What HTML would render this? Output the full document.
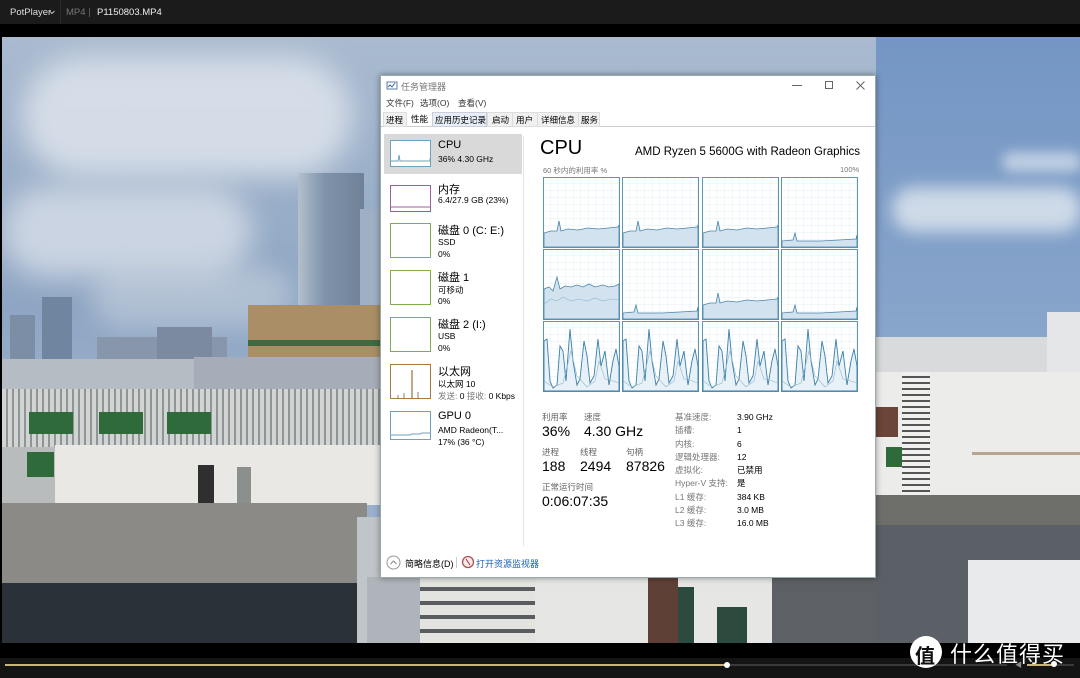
<!DOCTYPE html>
<html><head><meta charset="utf-8">
<style>
*{margin:0;padding:0;box-sizing:border-box}
body{width:1080px;height:678px;overflow:hidden;background:#000;position:relative;font-family:"Liberation Sans","Noto Sans CJK SC",sans-serif}
.a{position:absolute}
.t{position:absolute;white-space:nowrap;color:#000}
</style></head><body>
<!-- top bar -->
<div class="a" style="left:0;top:0;width:1080px;height:24px;background:#1b1b1b"></div>
<div class="a" style="left:60px;top:0;width:1px;height:24px;background:#2c2c2c"></div>
<div class="t" style="left:10px;top:7px;font-size:9.5px;color:#ddd">PotPlayer</div>
<svg class="a" style="left:49px;top:10px" width="6" height="5"><polyline points="0.5,1 3,3.5 5.5,1" fill="none" stroke="#bbb"/></svg>
<div class="t" style="left:66px;top:7px;font-size:9.5px;color:#777">MP4</div>
<div class="a" style="left:89px;top:8px;width:1px;height:9px;background:#555"></div>
<div class="t" style="left:97px;top:7px;font-size:9.5px;color:#eee">P1150803.MP4</div>

<!-- video scene -->
<div class="a" style="left:2px;top:37px;width:1078px;height:606px;background:linear-gradient(#aabbd0,#8ea6c3 45%,#9ab0cc 60%);overflow:hidden">
 <div class="a" style="left:20px;top:20px;width:330px;height:120px;border-radius:60px;background:rgba(230,234,240,.75);filter:blur(14px)"></div>
 <div class="a" style="left:0;top:150px;width:250px;height:90px;border-radius:45px;background:rgba(225,230,238,.7);filter:blur(14px)"></div>
 <div class="a" style="left:90px;top:230px;width:200px;height:60px;border-radius:30px;background:rgba(210,218,228,.5);filter:blur(12px)"></div>
 <div class="a" style="left:874px;top:0;width:204px;height:300px;background:linear-gradient(#7496c4,#88a5cb)"></div>
 <div class="a" style="left:890px;top:150px;width:190px;height:45px;border-radius:22px;background:rgba(225,232,240,.8);filter:blur(8px)"></div>
 <div class="a" style="left:1000px;top:115px;width:80px;height:20px;border-radius:10px;background:rgba(220,228,238,.7);filter:blur(6px)"></div>
 <div class="a" style="left:8px;top:278px;width:25px;height:60px;background:#7c8ea6"></div>
 <div class="a" style="left:40px;top:260px;width:30px;height:80px;background:#7085a0"></div>
 <div class="a" style="left:95px;top:300px;width:130px;height:40px;background:#8796aa"></div>
 <div class="a" style="left:155px;top:290px;width:55px;height:50px;background:#7b8aa0"></div>
 <div class="a" style="left:296px;top:136px;width:66px;height:162px;background:linear-gradient(90deg,#b4c0cc,#7f93aa 40%,#6f8196)"></div>
 <div class="a" style="left:358px;top:172px;width:22px;height:126px;background:#9fb0c4"></div>
 <div class="a" style="left:246px;top:268px;width:134px;height:52px;background:#a98e66"></div>
 <div class="a" style="left:246px;top:303px;width:134px;height:6px;background:#3f6a40"></div>
 <div class="a" style="left:192px;top:320px;width:188px;height:32px;background:#a7adb8"></div>
 <div class="a" style="left:0;top:322px;width:192px;height:30px;background:#b5bcc4"></div>
 <div class="a" style="left:0;top:352px;width:380px;height:58px;background:repeating-linear-gradient(90deg,#d2d4d4 0 4px,#8f9494 4px 6px)"></div>
 <div class="a" style="left:27px;top:375px;width:44px;height:22px;background:#2f6b3a"></div>
 <div class="a" style="left:97px;top:375px;width:44px;height:22px;background:#2f6b3a"></div>
 <div class="a" style="left:165px;top:375px;width:44px;height:22px;background:#2f6b3a"></div>
 <div class="a" style="left:0;top:410px;width:55px;height:60px;background:#b9bcbc"></div>
 <div class="a" style="left:25px;top:415px;width:27px;height:25px;background:#2f6b3a"></div>
 <div class="a" style="left:53px;top:408px;width:327px;height:60px;background:#e9e8e4"></div>
 <div class="a" style="left:196px;top:428px;width:16px;height:38px;background:#2f2f2f"></div>
 <div class="a" style="left:235px;top:430px;width:14px;height:36px;background:#8b8f8d"></div>
 <div class="a" style="left:0;top:466px;width:365px;height:80px;background:#8c8a86"></div>
 <div class="a" style="left:0;top:546px;width:365px;height:60px;background:#2b3138"></div>
 <div class="a" style="left:355px;top:480px;width:25px;height:126px;background:#bfc5c9"></div>
 <div class="a" style="left:365px;top:540px;width:65px;height:66px;background:#aeb4ba"></div>
 <div class="a" style="left:418px;top:540px;width:115px;height:66px;background:repeating-linear-gradient(#e3e3e0 0 10px,#5a5d5f 10px 14px)"></div>
 <div class="a" style="left:533px;top:540px;width:240px;height:66px;background:#e6e6e4"></div>
 <div class="a" style="left:646px;top:540px;width:30px;height:66px;background:#5e4036"></div>
 <div class="a" style="left:676px;top:550px;width:16px;height:56px;background:#2d4a3e"></div>
 <div class="a" style="left:715px;top:570px;width:30px;height:36px;background:#2d4a3e"></div>
 <div class="a" style="left:770px;top:540px;width:110px;height:66px;background:#5d6064"></div>
 <div class="a" style="left:874px;top:300px;width:204px;height:40px;background:#d8dadc"></div>
 <div class="a" style="left:1045px;top:275px;width:35px;height:60px;background:#e4e6e8"></div>
 <div class="a" style="left:874px;top:335px;width:204px;height:140px;background:#ececea"></div>
 <div class="a" style="left:900px;top:335px;width:28px;height:125px;background:repeating-linear-gradient(#f0f0ee 0 4px,#555 4px 6px)"></div>
 <div class="a" style="left:874px;top:370px;width:22px;height:30px;background:#6a4538"></div>
 <div class="a" style="left:884px;top:410px;width:16px;height:20px;background:#2f6b3a"></div>
 <div class="a" style="left:970px;top:415px;width:110px;height:3px;background:#b8a590"></div>
 <div class="a" style="left:874px;top:458px;width:204px;height:30px;background:#6e6e6a"></div>
 <div class="a" style="left:874px;top:488px;width:204px;height:118px;background:#5b6066"></div>
 <div class="a" style="left:966px;top:523px;width:112px;height:83px;background:#e8eaec"></div>
</div>

<!-- task manager -->
<div class="a" style="left:380px;top:75px;width:496px;height:503px;background:#fff;border:1px solid #9aa;box-shadow:0 0 6px rgba(0,0,0,.4)">
 <svg class="a" style="left:5px;top:4px" width="12" height="12"><rect x="1" y="2" width="10" height="7" fill="none" stroke="#5a7da8"/><polyline points="2,7 4,5 6,7 9,3" fill="none" stroke="#3a6aa0"/></svg>
 <div class="t" style="left:20px;top:4px;font-size:9px;color:#777">任务管理器</div>
 <div class="a" style="left:411px;top:9px;width:10px;height:1px;background:#666"></div>
 <div class="a" style="left:444px;top:5px;width:8px;height:8px;border:1px solid #666"></div>
 <svg class="a" style="left:475px;top:5px" width="9" height="9"><path d="M0.5 0.5L8.5 8.5M8.5 0.5L0.5 8.5" stroke="#666"/></svg>
 <div class="t" style="left:5px;top:21px;font-size:8.5px;color:#333">文件(F)</div>
 <div class="t" style="left:39px;top:21px;font-size:8.5px;color:#333">选项(O)</div>
 <div class="t" style="left:77px;top:21px;font-size:8.5px;color:#333">查看(V)</div>
 <div class="a" style="left:0;top:35px;width:494px;height:16px;border-bottom:1px solid #ccc;background:#fff"></div>
 <div class="a" style="left:2px;top:36px;width:24px;height:15px;background:#f0f0f0;border:1px solid #ddd"></div>
 <div class="t" style="left:5px;top:38px;font-size:8.5px">进程</div>
 <div class="t" style="left:30px;top:37px;font-size:8.5px">性能</div>
 <div class="a" style="left:51px;top:36px;width:55px;height:15px;background:#e6eff8;border:1px solid #ccd"></div>
 <div class="t" style="left:54px;top:38px;font-size:8.5px">应用历史记录</div>
 <div class="a" style="left:106px;top:36px;width:113px;height:15px;background:#f0f0f0;border:1px solid #ddd"></div>
 <div class="t" style="left:111px;top:38px;font-size:8.5px">启动</div>
 <div class="t" style="left:135px;top:38px;font-size:8.5px">用户</div>
 <div class="t" style="left:160px;top:38px;font-size:8.5px">详细信息</div>
 <div class="t" style="left:200px;top:38px;font-size:8.5px">服务</div>
 <div class="a" style="left:197px;top:36px;width:1px;height:15px;background:#ddd"></div>
 <div class="a" style="left:156px;top:36px;width:1px;height:15px;background:#ddd"></div>
 <div class="a" style="left:131px;top:36px;width:1px;height:15px;background:#ddd"></div>

 <div class="a" style="left:3px;top:58px;width:138px;height:40px;background:#d9d9d9"></div>
 <div class="a" style="left:142px;top:60px;width:1px;height:410px;background:#e5e5e5"></div>
 <svg class="a" style="left:9px;top:64px" width="41" height="300">
  <rect x=".5" y=".5" width="40" height="26" fill="#fff" stroke="#6ea2c0"/><polyline points="1,21 8,21 9,15 10,21 40,21 40,18" fill="none" stroke="#6ea2c0"/>
  <rect x=".5" y="45.5" width="40" height="26" fill="#fff" stroke="#9c5f9c"/><line x1="1" y1="67" x2="40" y2="67" stroke="#9c5f9c"/>
  <rect x=".5" y="83.5" width="40" height="34" fill="#fff" stroke="#7fae52"/>
  <rect x=".5" y="130.5" width="40" height="34" fill="#fff" stroke="#7fae52"/>
  <rect x=".5" y="177.5" width="40" height="34" fill="#fff" stroke="#7fae52"/>
  <rect x=".5" y="224.5" width="40" height="34" fill="#fff" stroke="#a77b40"/>
  <line x1="22" y1="258" x2="22" y2="230" stroke="#a77b40" stroke-width="1.3"/><line x1="14" y1="258" x2="14" y2="253" stroke="#a77b40"/><line x1="28" y1="258" x2="28" y2="252" stroke="#a77b40"/><line x1="8" y1="258" x2="8" y2="255" stroke="#a77b40"/>
  <rect x=".5" y="271.5" width="40" height="28" fill="#fff" stroke="#6ea2c0"/><polyline points="1,295 20,295 22,294 30,294 32,293 40,293" fill="none" stroke="#6ea2c0"/>
 </svg>
 <div class="t" style="left:57px;top:63px;font-size:11px">CPU</div>
 <div class="t" style="left:57px;top:78px;font-size:8.5px">36% 4.30 GHz</div>
 <div class="t" style="left:57px;top:105px;font-size:11px">内存</div>
 <div class="t" style="left:57px;top:119px;font-size:8.5px">6.4/27.9 GB (23%)</div>
 <div class="t" style="left:57px;top:146px;font-size:11px">磁盘 0 (C: E:)</div>
 <div class="t" style="left:57px;top:161px;font-size:8.5px">SSD</div>
 <div class="t" style="left:57px;top:173px;font-size:8.5px">0%</div>
 <div class="t" style="left:57px;top:193px;font-size:11px">磁盘 1</div>
 <div class="t" style="left:57px;top:208px;font-size:8.5px">可移动</div>
 <div class="t" style="left:57px;top:220px;font-size:8.5px">0%</div>
 <div class="t" style="left:57px;top:240px;font-size:11px">磁盘 2 (I:)</div>
 <div class="t" style="left:57px;top:255px;font-size:8.5px">USB</div>
 <div class="t" style="left:57px;top:267px;font-size:8.5px">0%</div>
 <div class="t" style="left:57px;top:287px;font-size:11px">以太网</div>
 <div class="t" style="left:57px;top:302px;font-size:8.5px">以太网 10</div>
 <div class="t" style="left:57px;top:314px;font-size:8.5px"><span style="color:#777">发送:</span> 0 <span style="color:#777">接收:</span> 0 Kbps</div>
 <div class="t" style="left:57px;top:334px;font-size:11px">GPU 0</div>
 <div class="t" style="left:57px;top:349px;font-size:8.5px">AMD Radeon(T...</div>
 <div class="t" style="left:57px;top:361px;font-size:8.5px">17% (36 °C)</div>

 <div class="t" style="left:159px;top:61px;font-size:20px">CPU</div>
 <div class="t" style="left:254px;top:70px;font-size:11.5px">AMD Ryzen 5 5600G with Radeon Graphics</div>
 <div class="t" style="left:162px;top:89px;font-size:7.5px;color:#777">60 秒内的利用率 %</div>
 <div class="t" style="left:459px;top:89px;font-size:7.5px;color:#777">100%</div>

 <div class="t" style="left:161px;top:335px;font-size:8.5px;color:#666">利用率</div>
 <div class="t" style="left:203px;top:335px;font-size:8.5px;color:#666">速度</div>
 <div class="t" style="left:161px;top:347px;font-size:14px">36%</div>
 <div class="t" style="left:203px;top:347px;font-size:14px">4.30 GHz</div>
 <div class="t" style="left:161px;top:370px;font-size:8.5px;color:#666">进程</div>
 <div class="t" style="left:199px;top:370px;font-size:8.5px;color:#666">线程</div>
 <div class="t" style="left:245px;top:370px;font-size:8.5px;color:#666">句柄</div>
 <div class="t" style="left:161px;top:382px;font-size:14px">188</div>
 <div class="t" style="left:199px;top:382px;font-size:14px">2494</div>
 <div class="t" style="left:245px;top:382px;font-size:14px">87826</div>
 <div class="t" style="left:161px;top:405px;font-size:8.5px;color:#666">正常运行时间</div>
 <div class="t" style="left:161px;top:417px;font-size:14px">0:06:07:35</div>

 <div class="t" style="left:294px;top:335px;font-size:8.5px;color:#777;line-height:13.3px">基准速度:<br>插槽:<br>内核:<br>逻辑处理器:<br>虚拟化:<br>Hyper-V 支持:<br>L1 缓存:<br>L2 缓存:<br>L3 缓存:</div>
 <div class="t" style="left:356px;top:335px;font-size:8.5px;line-height:13.3px">3.90 GHz<br>1<br>6<br>12<br>已禁用<br>是<br>384 KB<br>3.0 MB<br>16.0 MB</div>

 <svg class="a" style="left:5px;top:479px" width="15" height="15"><circle cx="7.5" cy="7.5" r="6.5" fill="none" stroke="#999"/><polyline points="4.5,9 7.5,6 10.5,9" fill="none" stroke="#888"/></svg>
 <div class="t" style="left:24px;top:481px;font-size:9px">简略信息(D)</div>
 <div class="a" style="left:75px;top:481px;width:1px;height:11px;background:#ccc"></div>
 <svg class="a" style="left:80px;top:479px" width="14" height="14"><circle cx="7" cy="7" r="5.5" fill="#f4eaea" stroke="#a55" stroke-width="1.3"/><line x1="5" y1="4" x2="9" y2="10" stroke="#a33"/></svg>
 <div class="t" style="left:95px;top:481px;font-size:9px;color:#1a5fb4">打开资源监视器</div>
</div>

<svg class="a" style="left:540px;top:174px" width="322" height="222">
 <defs>
  <pattern id="g" width="7.6" height="7" patternUnits="userSpaceOnUse"><path d="M7.6 0V7M0 7H7.6" fill="none" stroke="#dceaf4" stroke-width=".7"/></pattern>
  <g id="c"><rect x=".5" y=".5" width="76" height="70" fill="url(#g)" stroke="#5d95b3"/></g>
  <g id="f1"><path d="M1 56 L8 54 L14 54 L16 44 L18 54 L25 52 L35 53 L45 51 L55 52 L65 51 L75 50 L76 48 L76 70 L1 70Z" fill="#d2e3ef" stroke="#4a86aa" stroke-width=".8"/></g>
  <g id="f2"><path d="M1 64 L12 63 L14 56 L16 64 L40 64 L75 62 L76 58 L76 70 L1 70Z" fill="#d2e3ef" stroke="#4a86aa" stroke-width=".8"/></g>
  <g id="f3"><path d="M1 40 L6 38 L10 42 L14 28 L17 40 L22 37 L28 38 L34 36 L40 38 L46 35 L52 38 L60 36 L66 38 L72 37 L76 35 L76 70 L1 70Z" fill="#d2e3ef" stroke="#4a86aa" stroke-width=".8"/><path d="M1 55 L8 50 L14 52 L20 48 L28 52 L36 50 L44 52 L52 49 L60 52 L68 50 L76 51" fill="none" stroke="#8fb6cc" stroke-width=".6"/></g>
  <g id="f4"><path d="M1 20 L4 18 L7 60 L10 67 L14 64 L17 25 L20 30 L23 60 L27 8 L30 40 L34 64 L37 58 L41 20 L44 35 L47 62 L51 55 L55 18 L58 45 L62 30 L66 64 L70 40 L73 28 L76 45 L76 70 L1 70Z" fill="#e8f1f7" stroke="#3a7fa8" stroke-width=".9"/><path d="M1 60 L10 66 L20 62 L28 30 L34 55 L44 66 L52 60 L56 40 L62 58 L70 60 L76 62" fill="none" stroke="#8fb6cc" stroke-width=".6"/></g>
 </defs>
 <g transform="translate(3,3)"><use href="#c"/><use href="#f1"/></g>
 <g transform="translate(82,3)"><use href="#c"/><use href="#f1"/></g>
 <g transform="translate(162,3)"><use href="#c"/><use href="#f1"/></g>
 <g transform="translate(241,3)"><use href="#c"/><use href="#f2"/></g>
 <g transform="translate(3,75)"><use href="#c"/><use href="#f3"/></g>
 <g transform="translate(82,75)"><use href="#c"/><use href="#f2"/></g>
 <g transform="translate(162,75)"><use href="#c"/><use href="#f1"/></g>
 <g transform="translate(241,75)"><use href="#c"/><use href="#f2"/></g>
 <g transform="translate(3,147)"><use href="#c"/><use href="#f4"/></g>
 <g transform="translate(82,147)"><use href="#c"/><use href="#f4"/></g>
 <g transform="translate(162,147)"><use href="#c"/><use href="#f4"/></g>
 <g transform="translate(241,147)"><use href="#c"/><use href="#f4"/></g>
</svg>

<div class="a" style="left:0;top:658px;width:1080px;height:20px;background:#141414"></div>
<div class="a" style="left:5px;top:664px;width:722px;height:2px;background:#c9b47a"></div>
<div class="a" style="left:727px;top:664px;width:280px;height:2px;background:#3a3a3a"></div>
<div class="a" style="left:724px;top:662px;width:6px;height:6px;border-radius:50%;background:#fff"></div>
<div class="a" style="left:910px;top:636px;width:32px;height:32px;border-radius:50%;background:#fff"></div>
<div class="t" style="left:915px;top:640px;font-size:20px;font-weight:bold;color:#111">值</div>
<div class="t" style="left:950px;top:637px;font-size:22px;letter-spacing:1px;color:#fff;font-family:'Noto Sans CJK SC',sans-serif">什么值得买</div>
<div class="a" style="left:1027px;top:664px;width:27px;height:2px;background:#c9b47a"></div>
<div class="a" style="left:1054px;top:664px;width:20px;height:2px;background:#3a3a3a"></div>
<div class="a" style="left:1051px;top:661px;width:6px;height:6px;border-radius:50%;background:#fff"></div>
<div class="t" style="left:1015px;top:660px;font-size:7px;color:#888">◀</div>
</body></html>
